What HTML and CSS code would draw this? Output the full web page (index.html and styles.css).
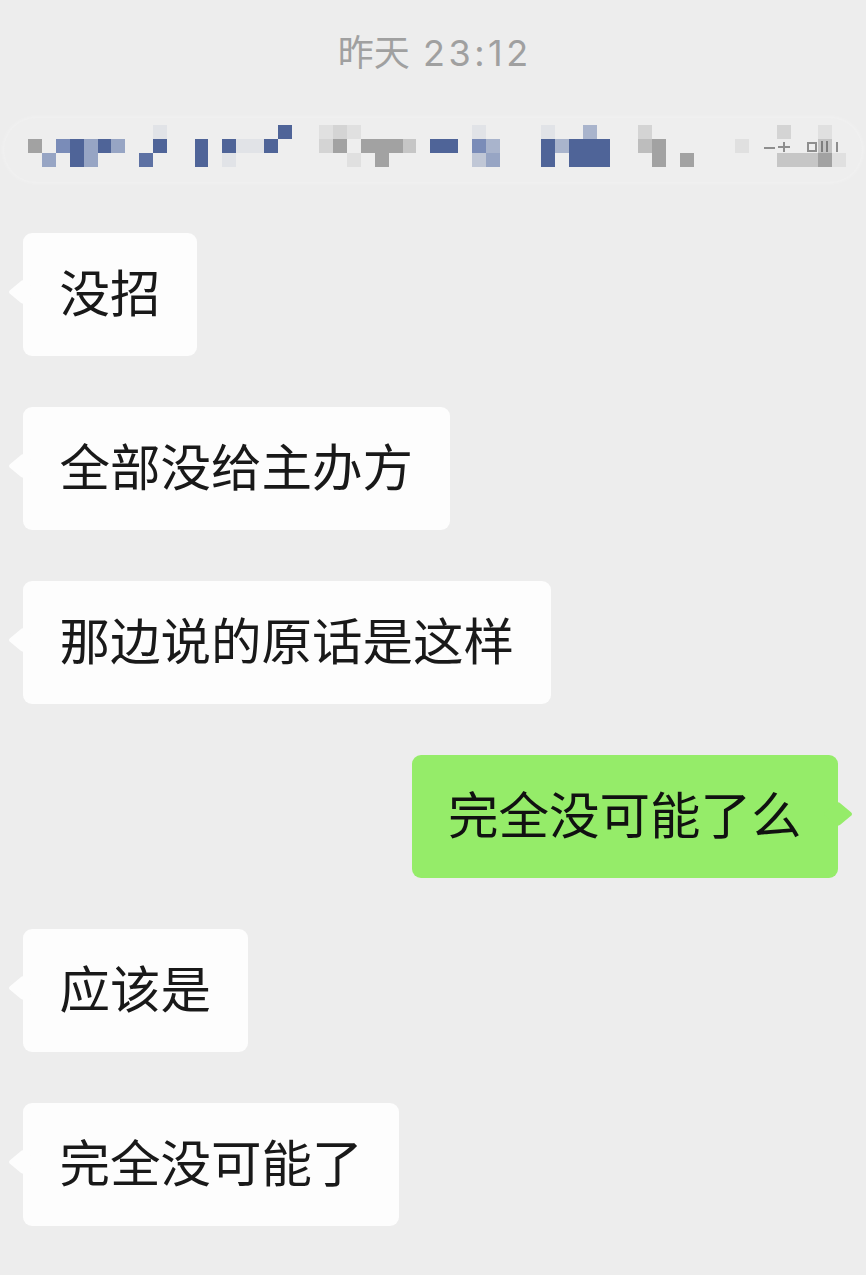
FILE: index.html
```html
<!DOCTYPE html>
<html lang="zh-CN">
<head>
  <meta charset="UTF-8">
  <title>聊天</title>
  <link rel="stylesheet" href="styles.css">
</head>
<body>

  <div class="chat">
    <div class="time">昨天 <span class="clock">23:12</span></div>

    <!-- 打了码的一条消息 -->
    <div class="recalled">
      <div class="mosaic" id="mosaic"></div>
    </div>

    <div class="messages">
      <div class="bubble">没招</div>
      <div class="bubble">全部没给主办方</div>
      <div class="bubble">那边说的原话是这样</div>
      <div class="bubble me">完全没可能了么</div>
      <div class="bubble">应该是</div>
      <div class="bubble">完全没可能了</div>
    </div>
  </div>

  <script src="mosaic.js"></script>
</body>
</html>
```

FILE: styles.css
```css
:root {
  --bg: #ededed;
  --bubble: #fdfdfd;
  --me: #95ec69;
  --text: #191919;
  --time: #a0a0a0;
  --cell: 13.87px;
}

body {
  margin: 0;
  background: var(--bg);
  color: var(--text);
  font-family: Inter, "Noto Sans CJK SC", sans-serif;
}

.chat {
  padding: 28px 0 49px;
}

.time {
  height: 50px;
  line-height: 50px;
  text-align: center;
  font-size: 36px;
  word-spacing: 3px;
  color: var(--time);
}

.time .clock {
  letter-spacing: 3.5px;
  margin-right: -3.5px;
}

/* mosaic strip */
.recalled {
  box-sizing: border-box;
  height: 64px;
  margin: 40px 4px 0;
  padding: 7px 0 0 24.3px;
  border-radius: 32px;
  background: #eeeeee;
  box-shadow: 0 0 5px rgba(255, 255, 255, 0.45);
}

.mosaic {
  display: grid;
  grid-template-columns: repeat(59, var(--cell));
  grid-auto-rows: var(--cell);
}

.mosaic span {
  position: relative;
}

.c-D { background: #4f6498; }
.c-m { background: #5d71a3; }
.c-M { background: #7a8cb8; }
.c-L { background: #97a5c4; }
.c-l { background: #a9b4cc; }
.c-p { background: #c0c7d6; }
.c-w { background: #e1e3e7; }
.c-G { background: #a2a2a2; }
.c-g { background: #bdbdbd; }
.c-s { background: #c6c6c6; }
.c-h { background: #d4d4d4; }
.c-e { background: #e0e0e0; }

/* leftovers of the blurred text */
.c-dash::after,
.c-plus::before,
.c-plus::after,
.c-bar::after,
.c-bars::after,
.c-box::after {
  content: "";
  position: absolute;
  background: #8e8e8e;
}

.c-dash::after { left: 1px; top: 8px; width: 11px; height: 2px; }
.c-plus::before { left: 1px; top: 7px; width: 12px; height: 2px; }
.c-plus::after { left: 6px; top: 3px; width: 2px; height: 10px; }
.c-box::after { left: 3px; top: 3px; width: 6px; height: 6px; border: 2px solid #8e8e8e; background: transparent; }
.c-bars { background: #c4c4c4; }
.c-bars::after { left: 3px; top: 2px; width: 3px; height: 11px; background: transparent; border-left: 2px solid #7e7e7e; border-right: 2px solid #7e7e7e; }
.c-bar::after { left: 4px; top: 3px; width: 2px; height: 10px; }

/* messages */
.messages {
  display: flex;
  flex-direction: column;
  gap: 51px;
  margin-top: 51px;
  padding: 0 28px 0 23px;
}

.bubble {
  position: relative;
  align-self: flex-start;
  padding: 23px 36.5px 25px;
  border-radius: 9px;
  background: var(--bubble);
  font-size: 50.5px;
  line-height: 75px;
}

.bubble::before {
  content: "";
  position: absolute;
  top: 50px;
  left: -9px;
  width: 18px;
  height: 18px;
  border-radius: 3px;
  background: inherit;
  transform: scaleX(1.2) rotate(45deg);
}

.bubble.me {
  align-self: flex-end;
  background: var(--me);
  color: #111;
}

.bubble.me::before {
  left: auto;
  right: -9px;
}
```

FILE: mosaic.js
```js
// mosaic cells: [row, column, colour]
const COLS = 59;
const cells = [
  [0, 9, "w"], [0, 18, "D"], [0, 21, "e"], [0, 22, "h"], [0, 23, "e"],
  [0, 32, "w"], [0, 37, "w"], [0, 40, "l"], [0, 44, "h"], [0, 54, "h"], [0, 57, "e"],

  [1, 0, "G"], [1, 2, "M"], [1, 3, "D"], [1, 4, "L"], [1, 5, "D"], [1, 6, "L"],
  [1, 9, "D"], [1, 12, "D"], [1, 14, "D"], [1, 15, "w"], [1, 16, "w"], [1, 17, "D"],
  [1, 21, "h"], [1, 22, "G"], [1, 24, "G"], [1, 25, "G"], [1, 26, "G"], [1, 27, "s"],
  [1, 29, "D"], [1, 30, "D"], [1, 32, "M"], [1, 33, "l"], [1, 37, "D"], [1, 38, "l"],
  [1, 39, "D"], [1, 40, "D"], [1, 41, "D"], [1, 44, "g"], [1, 45, "G"], [1, 51, "e"],
  [1, 53, "dash"], [1, 54, "plus"], [1, 56, "box"], [1, 57, "bars"], [1, 58, "bar"],

  [2, 1, "L"], [2, 3, "D"], [2, 4, "L"], [2, 8, "m"], [2, 12, "D"], [2, 14, "w"],
  [2, 23, "e"], [2, 25, "G"], [2, 32, "p"], [2, 33, "L"], [2, 37, "D"],
  [2, 39, "D"], [2, 40, "D"], [2, 41, "D"], [2, 45, "G"], [2, 47, "G"],
  [2, 54, "s"], [2, 55, "s"], [2, 56, "s"], [2, 57, "G"], [2, 58, "e"]
];

const grid = [[], [], []].map(() => new Array(COLS).fill(""));
cells.forEach(([r, c, colour]) => { grid[r][c] = colour; });

const mosaic = document.getElementById("mosaic");
grid.forEach(row => {
  row.forEach(colour => {
    const cell = document.createElement("span");
    if (colour) cell.className = "c-" + colour;
    mosaic.appendChild(cell);
  });
});
```
